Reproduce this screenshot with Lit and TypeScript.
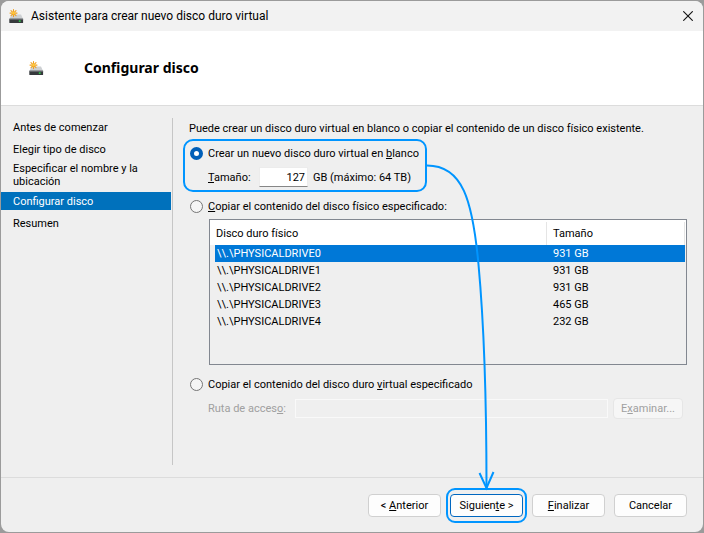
import { LitElement, html, css, svg } from "lit";
import { customElement, state } from "lit/decorators.js";
import { classMap } from "lit/directives/class-map.js";

@customElement("drive-icon")
export class DriveIcon extends LitElement {
  static styles = css`
    :host {
      display: block;
      width: 15px;
      height: 15px;
    }
    svg {
      display: block;
    }
  `;

  render() {
    return html`<svg width="15" height="15" viewBox="0 0 15 15" aria-hidden="true">
      <path d="M2.4 5.6h9.6l2.2 4.6H.4z" fill="#cdd0d3" />
      <rect x=".3" y="9.8" width="13.8" height="4.2" rx=".6" fill="#36393c" />
      <rect x=".3" y="9.5" width="13.8" height="1" fill="#8a8e92" />
      <rect x="9.8" y="11.4" width="1.8" height="1.4" fill="#2be04a" />
      <g stroke="#f0a020" stroke-width="1.1" stroke-linecap="round">
        <path d="M4.5.6v7M1 4.1h7M2 1.6l5 5M7 1.6l-5 5" />
      </g>
      <circle cx="4.5" cy="4.1" r="1.5" fill="#ffc83c" />
    </svg>`;
  }
}

interface Drive {
  name: string;
  size: string;
}

@customElement("app-root")
export class AppRoot extends LitElement {
  static styles = css`
    :host {
      display: block;
      box-sizing: border-box;
      min-height: 100vh;
      padding: 1px;
      background: #9b9b9b;
      color: #000;
      font: 11px/13px Roboto, "Noto Sans", sans-serif;
    }
    * {
      box-sizing: border-box;
    }
    .window {
      position: relative;
      display: flex;
      flex-direction: column;
      min-height: calc(100vh - 2px);
      border-radius: 8px;
      overflow: hidden;
      background: #efefef;
    }
    .titlebar {
      display: flex;
      align-items: center;
      gap: 7px;
      height: 30px;
      padding: 0 8px;
      background: #f2f2f2;
      font-size: 12px;
      line-height: 16px;
    }
    .titlebar span {
      flex: 1;
    }
    .close {
      display: grid;
      place-items: center;
      width: 14px;
      height: 14px;
      padding: 0;
      border: 0;
      background: none;
    }
    .header {
      display: flex;
      align-items: center;
      gap: 40px;
      height: 75px;
      padding: 0 28px;
      background: #fff;
      border-bottom: 1px solid #dcdcdc;
    }
    h1 {
      margin: 0;
      font: bold 14px/18px "Noto Sans", "Open Sans", sans-serif;
    }
    .body {
      flex: 1;
      display: flex;
      padding: 12px 16px 12px 0;
      border-bottom: 1px solid #dcdcdc;
    }
    nav {
      flex: none;
      display: flex;
      flex-direction: column;
      gap: 4px;
      width: 172px;
      padding-right: 1px;
      border-right: 1px solid #c6c6c6;
    }
    nav a {
      display: flex;
      align-items: center;
      min-height: 18px;
      padding: 0 32px 0 12px;
      color: inherit;
      text-decoration: none;
    }
    nav a.current {
      background: #0071bc;
      color: #fff;
    }
    main {
      flex: 1;
      display: flex;
      flex-direction: column;
      padding-left: 16px;
    }
    p {
      margin: 4px 0;
    }
    .callout {
      align-self: flex-start;
      display: flex;
      flex-direction: column;
      gap: 4px;
      min-width: 244px;
      height: 53px;
      margin-left: -6px;
      padding: 3px 4px;
      border: 2px solid #0095ff;
      border-radius: 10px;
    }
    .option {
      display: flex;
      align-items: center;
      gap: 5px;
      height: 20px;
      white-space: nowrap;
    }
    .option input {
      appearance: none;
      flex: none;
      width: 13px;
      height: 13px;
      margin: 0 0 0 1px;
      border: 1px solid #767676;
      border-radius: 50%;
      background: #f5f5f5;
    }
    .option input:checked {
      border: 4px solid #005fb8;
      background: #fff;
    }
    .field {
      display: flex;
      align-items: center;
      height: 20px;
      padding-left: 19px;
      white-space: nowrap;
    }
    .field label {
      min-width: 43px;
    }
    .size {
      width: 49px;
      height: 20px;
      margin: 0 5px 0 8px;
      padding: 0 2px;
      border: 1px solid #ececec;
      border-bottom-color: #868686;
      background: #fff;
      font: inherit;
      text-align: right;
    }
    .copy {
      margin-top: 4px;
    }
    .list {
      height: 146px;
      margin: 3px 0 9px 20px;
      padding: 2px 1px 0 5px;
      border: 1px solid #828790;
      background: linear-gradient(#fff 25px, #efefef 25px);
    }
    table {
      width: 100%;
      table-layout: fixed;
      border-collapse: separate;
      border-spacing: 0;
    }
    th {
      height: 23px;
      padding: 0 6px;
      border-right: 1px solid #e5e5e5;
      font-weight: normal;
      text-align: left;
    }
    th.drive {
      width: 332px;
      padding-left: 1px;
    }
    td {
      height: 17px;
      padding: 0 6px;
      white-space: nowrap;
    }
    td:first-child {
      padding-left: 2px;
    }
    .selected td {
      color: #fff;
      background: #0078d7;
    }
    .path {
      height: 21px;
      margin-top: 4px;
      color: #a0a0a0;
    }
    .path label {
      min-width: 79px;
    }
    .path input {
      flex: 1;
      min-width: 0;
      height: 19px;
      margin: 0 5px 0 8px;
      border: 1px solid #f9f9f9;
      background: #efefef;
    }
    button {
      color: inherit;
      font: inherit;
    }
    .browse {
      width: 70px;
      height: 21px;
      margin-right: 4px;
      padding: 0;
      border: 1px solid #e6e6e6;
      border-radius: 4px;
      background: #f6f6f6;
    }
    footer {
      display: flex;
      justify-content: flex-end;
      gap: 9px;
      padding: 16px 16px 15px;
    }
    .push {
      position: relative;
      width: 73px;
      height: 23px;
      padding: 0;
      border: 1px solid #d0d0d0;
      border-radius: 4px;
      background: #fdfdfd;
    }
    .primary {
      border-color: #0067c0;
    }
    .primary::after {
      content: "";
      position: absolute;
      inset: -7px -5px;
      border: 2px solid #0095ff;
      border-radius: 9px;
    }
    .arrow {
      position: absolute;
      inset: 0;
      width: 100%;
      height: 100%;
      pointer-events: none;
    }
  `;

  private steps = [
    "Antes de comenzar",
    "Elegir tipo de disco",
    "Especificar el nombre y la ubicación",
    "Configurar disco",
    "Resumen",
  ];

  private drives: Drive[] = [
    { name: "\\\\.\\PHYSICALDRIVE0", size: "931 GB" },
    { name: "\\\\.\\PHYSICALDRIVE1", size: "931 GB" },
    { name: "\\\\.\\PHYSICALDRIVE2", size: "931 GB" },
    { name: "\\\\.\\PHYSICALDRIVE3", size: "465 GB" },
    { name: "\\\\.\\PHYSICALDRIVE4", size: "232 GB" },
  ];

  @state() private from = { x: 0, y: 0 };
  @state() private to = { x: 0, y: 0 };

  private observer = new ResizeObserver(() => this.connect());

  firstUpdated() {
    this.observer.observe(this);
    this.connect();
  }

  disconnectedCallback() {
    super.disconnectedCallback();
    this.observer.disconnect();
  }

  /* Ties the arrow's ends to the highlighted option and the Next button. */
  private connect() {
    const box = (selector: string) => this.renderRoot.querySelector(selector)!.getBoundingClientRect();
    const origin = box(".window");
    const source = box(".callout");
    const target = box(".primary");
    this.from = { x: source.right - origin.left, y: source.top + source.height / 2 - origin.top };
    this.to = { x: target.left + target.width / 2 - origin.left, y: target.top - 6 - origin.top };
  }

  private arrow() {
    const { x: x1, y: y1 } = this.from;
    const { x: x2, y: y2 } = this.to;
    return svg`<g fill="none" stroke="#0095ff" stroke-width="2">
      <path d="M${x1} ${y1}C${x2 - 24} ${y1} ${x2 - 14} ${y1 + 34} ${x2 - 8} ${y1 + 99}S${x2} ${y2 - 68} ${x2} ${y2}" />
      <path d="M${x2 - 7} ${y2 - 15}L${x2} ${y2}L${x2 + 7} ${y2 - 16}" />
    </g>`;
  }

  render() {
    return html`
      <div class="window">
        <div class="titlebar">
          <drive-icon></drive-icon>
          <span>Asistente para crear nuevo disco duro virtual</span>
          <button class="close" aria-label="Cerrar">
            <svg width="10" height="10" viewBox="0 0 10 10" stroke="#111" stroke-width="1.1">
              <path d="M.3.3l9.4 9.4M9.7.3L.3 9.7" />
            </svg>
          </button>
        </div>
        <header class="header">
          <drive-icon></drive-icon>
          <h1>Configurar disco</h1>
        </header>
        <div class="body">
          <nav>
            ${this.steps.map(
              (step, i) => html`<a href="#" class=${classMap({ current: i === 3 })}>${step}</a>`
            )}
          </nav>
          <main>
            <p>Puede crear un disco duro virtual en blanco o copiar el contenido de un disco físico existente.</p>
            <div class="callout">
              <label class="option">
                <input type="radio" name="source" checked />
                <span>Crear un nuevo disco duro virtual en <u>b</u>lanco</span>
              </label>
              <div class="field">
                <label for="size"><u>T</u>amaño:</label>
                <input class="size" id="size" value="127" />
                <span>GB (máximo: 64 TB)</span>
              </div>
            </div>
            <label class="option copy">
              <input type="radio" name="source" />
              <span><u>C</u>opiar el contenido del disco físico especificado:</span>
            </label>
            <div class="list">
              <table>
                <thead>
                  <tr>
                    <th class="drive">Disco duro físico</th>
                    <th>Tamaño</th>
                  </tr>
                </thead>
                <tbody>
                  ${this.drives.map(
                    (drive, i) => html`<tr class=${classMap({ selected: i === 0 })}>
                      <td>${drive.name}</td>
                      <td>${drive.size}</td>
                    </tr>`
                  )}
                </tbody>
              </table>
            </div>
            <label class="option">
              <input type="radio" name="source" />
              <span>Copiar el contenido del disco duro <u>v</u>irtual especificado</span>
            </label>
            <div class="field path">
              <label for="path">Ruta de acces<u>o</u>:</label>
              <input id="path" disabled />
              <button class="browse" disabled>E<u>x</u>aminar...</button>
            </div>
          </main>
        </div>
        <footer>
          <button class="push">&lt; <u>A</u>nterior</button>
          <button class="push primary">Siguien<u>t</u>e &gt;</button>
          <button class="push"><u>F</u>inalizar</button>
          <button class="push">Cancelar</button>
        </footer>
        <svg class="arrow" aria-hidden="true">${this.arrow()}</svg>
      </div>
    `;
  }
}
